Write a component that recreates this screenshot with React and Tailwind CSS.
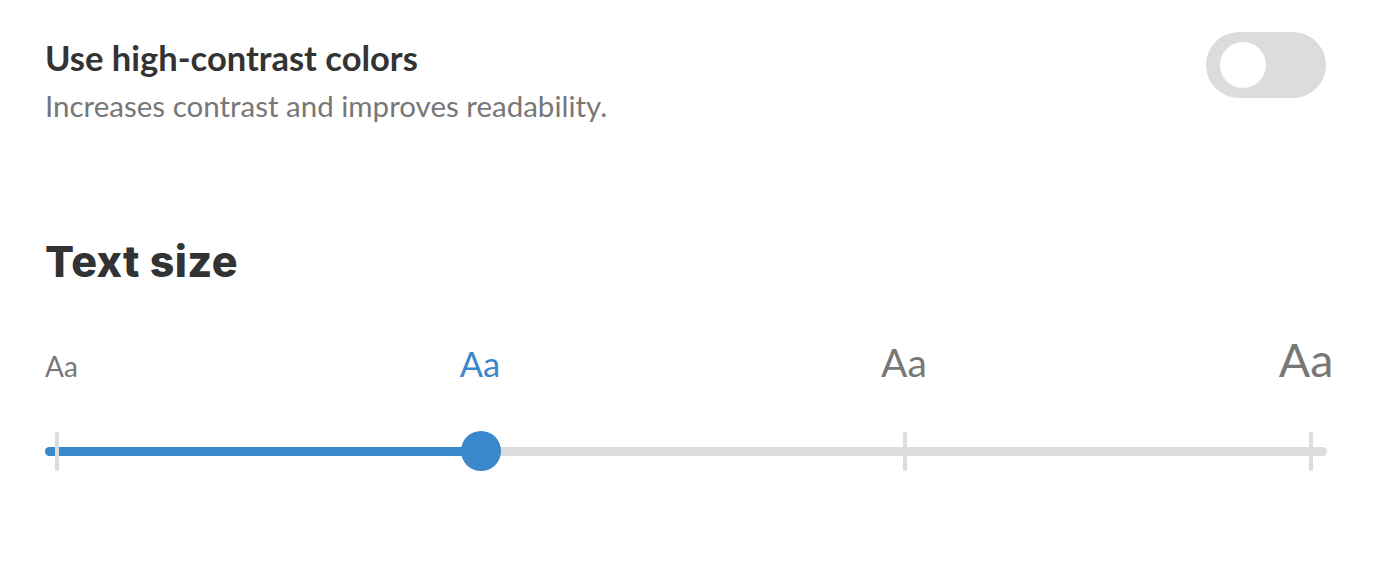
import React from "react";

export default function App() {
  const lato = { fontFamily: "Lato, 'Liberation Sans', sans-serif" };
  return (
    <div className="w-[1398px] h-[578px] bg-white" style={lato}>
      <div className="pl-[45px] pr-[72px] pt-[38px]">
        <div className="flex justify-between items-start">
          <div>
            <div className="text-[34.5px] leading-[40px] font-bold text-[#333333]">Use high-contrast colors</div>
            <div className="mt-[10px] text-[29.5px] leading-[36px] text-[#777777]">Increases contrast and improves readability.</div>
          </div>
          <button className="mt-[-6px] w-[120px] h-[66px] rounded-full bg-[#dcdcdc] flex items-center pl-[14px]">
            <span className="block w-[46px] h-[46px] rounded-full bg-white" />
          </button>
        </div>

        <h2
          className="mt-[111px] text-[43px] leading-[52px] font-extrabold text-[#333333] tracking-[0.4px]"
          style={{ fontFamily: "Inter, 'Noto Sans', sans-serif" }}
        >
          Text size
        </h2>

        <div className="mt-[49px] flex items-baseline text-[#777777] leading-none">
          <div className="shrink-0 w-[385px] text-[28px]">Aa</div>
          <div className="shrink-0 w-[100px] text-center text-[34.5px] text-[#3b87cb]">Aa</div>
          <div className="shrink-0 ml-[324px] w-[100px] text-center text-[39px]">Aa</div>
          <div className="shrink-0 ml-[302px] w-[100px] text-center text-[46.5px]">Aa</div>
        </div>

        <div className="mt-[64px] relative h-[9px] w-[1282px] rounded-full bg-[#dcdcdc]">
          <div className="h-full w-[436px] rounded-full bg-[#3b87cb]" />
          <span className="absolute left-[10px] top-[-15px] w-[4px] h-[39px] rounded-full bg-[#dcdcdc]" />
          <span className="absolute left-[858px] top-[-15px] w-[4px] h-[39px] rounded-full bg-[#dcdcdc]" />
          <span className="absolute left-[1264px] top-[-15px] w-[4px] h-[39px] rounded-full bg-[#dcdcdc]" />
          <span className="absolute left-[416px] top-[-16px] w-[40px] h-[40px] rounded-full bg-[#3b87cb]" />
        </div>
      </div>
    </div>
  );
}
